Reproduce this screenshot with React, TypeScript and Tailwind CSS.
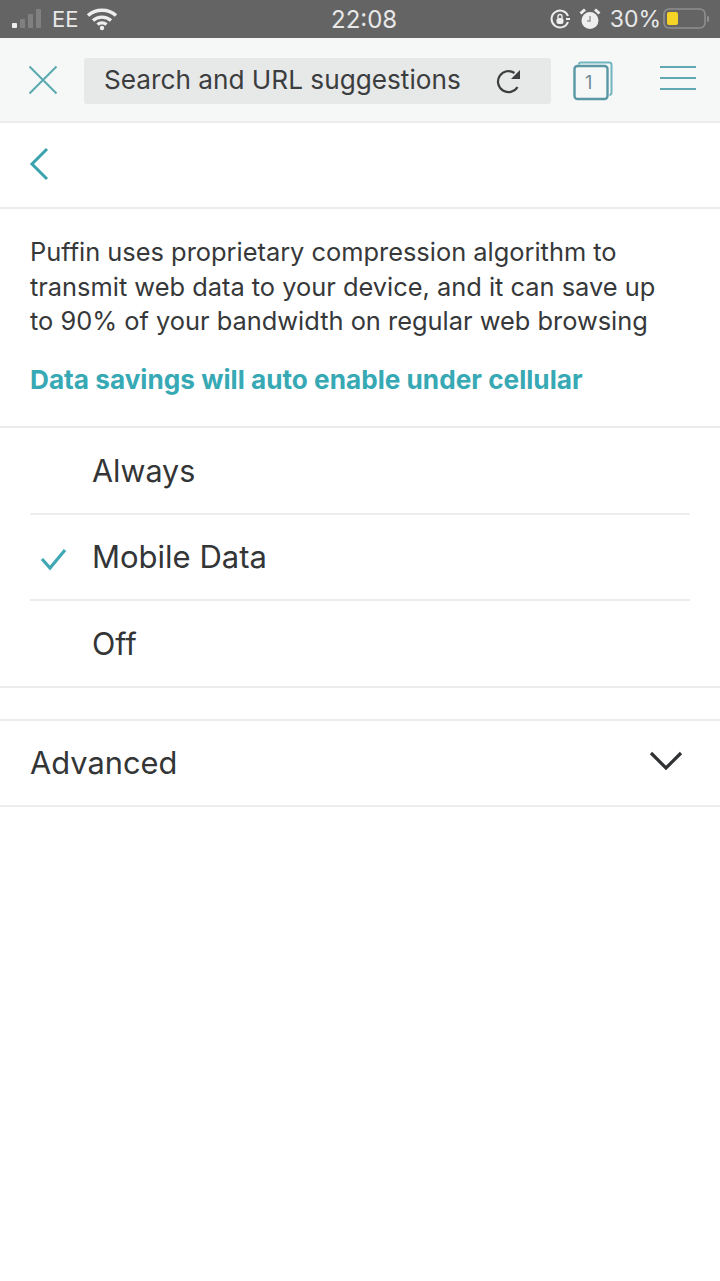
export default function App() {
  const font = { fontFamily: 'Inter, "Liberation Sans", sans-serif' };
  return (
    <div style={font} className="w-[720px] h-[1281px] bg-white overflow-hidden flex flex-col text-[#333536]">
      {/* status bar */}
      <div className="h-[38px] bg-[#646464] flex items-center justify-between pl-3 pr-[7px] text-[#e8e8e8] shrink-0 relative">
        <div className="flex items-center">
          <svg width="32" height="20" viewBox="0 0 32 20">
            <rect x="0" y="14" width="5" height="5" rx="1" fill="#eee" />
            <rect x="8" y="10" width="5" height="9" rx="1" fill="#808080" />
            <rect x="16" y="5" width="5" height="14" rx="1" fill="#808080" />
            <rect x="24" y="0" width="5" height="19" rx="1" fill="#808080" />
          </svg>
          <span className="text-[22px] ml-[8px] leading-none">EE</span>
          <svg width="32" height="24" viewBox="0 0 32 24" className="ml-[8px]" fill="none" stroke="#eee" strokeWidth="3.4">
            <path d="M2 8.5C9.5 1.5 22.5 1.5 30 8.5" />
            <path d="M7 13.5C12 9 20 9 25 13.5" />
            <path d="M11.5 17.5C14 15.5 18 15.5 20.5 17.5" />
            <circle cx="16" cy="21" r="2.2" fill="#eee" stroke="none" />
          </svg>
        </div>
        <span className="absolute left-[331px] top-[6px] text-[24px] leading-[28px]">22:08</span>
        <div className="flex items-center">
          <svg width="22" height="22" viewBox="0 0 22 22" fill="none" stroke="#eee" strokeWidth="2">
            <path d="M19 14A8.5 8.5 0 1 1 19 8" />
            <path d="M17 11h4" />
            <rect x="7.5" y="10" width="7" height="6" rx="2" fill="#eee" stroke="none" />
            <path d="M9 10V8.5a2 2 0 0 1 4 0V10" strokeWidth="1.4" />
          </svg>
          <svg width="24" height="24" viewBox="0 0 24 24" className="ml-[7px]">
            <circle cx="12" cy="13.5" r="8.5" fill="#eee" />
            <path d="M2.5 6.5L7 2.5M21.5 6.5L17 2.5" stroke="#eee" strokeWidth="3" />
            <path d="M12 9v5h-3" stroke="#999" strokeWidth="1.5" fill="none" />
          </svg>
          <span className="text-[23px] leading-none ml-[8px]">30%</span>
          <svg width="50" height="24" viewBox="0 0 50 24" className="ml-[2px]" fill="none">
            <rect x="1" y="2" width="41" height="19" rx="5" stroke="#8f8f8f" strokeWidth="1.6" />
            <rect x="4" y="5" width="11" height="13" rx="2" fill="#f5d327" />
            <rect x="44" y="9" width="2" height="6" rx="1" fill="#8f8f8f" />
          </svg>
        </div>
      </div>

      {/* toolbar */}
      <div className="h-[85px] bg-[#f6f7f7] border-b-2 border-[#ececec] flex items-center shrink-0">
        <svg width="30" height="30" viewBox="0 0 30 30" className="ml-[28px]" stroke="#5ba9b0" strokeWidth="2" fill="none">
          <path d="M1.5 1.5L28.5 28.5M28.5 1.5L1.5 28.5" />
        </svg>
        <div className="ml-[26px] mt-[2px] w-[467px] h-[46px] bg-[#e7e8e8] rounded-[3px] flex items-center pl-5 pr-[28px] justify-between">
          <span className="text-[26.2px] text-[#3b3d3e] leading-none whitespace-nowrap">Search and URL suggestions</span>
          <svg width="28" height="28" viewBox="0 0 28 28" fill="none" stroke="#3c3e3f" strokeWidth="2.2">
            <path d="M22.5 20A10.5 10.5 0 1 1 19.5 6" />
            <path d="M25 3v9h-9z" fill="#3c3e3f" stroke="none" />
          </svg>
        </div>
        <div className="ml-[22px] mt-[2px] w-[40px] h-[40px] relative">
          <svg width="40" height="40" viewBox="0 0 40 40" fill="none" className="absolute inset-0">
            <path d="M6 3.5C6 2 7 1.5 8 1.5H36.5C38 1.5 38.5 2.5 38.5 4V31C38.5 33 38 34 36.5 34" stroke="#6fb6bf" strokeWidth="2" />
            <rect x="1.5" y="5" width="33" height="33" rx="3" fill="#f6f7f7" stroke="#5a98a5" strokeWidth="2.4" />
          </svg>
          <span className="absolute left-[12px] top-[12px] text-[18px] leading-[20px] text-[#6d8a92]">1</span>
        </div>
        <div className="ml-[47px] mb-[3px] w-[36px] flex flex-col gap-[9px]">
          <div className="h-[2px] bg-[#62a8b2]" />
          <div className="h-[2px] bg-[#62a8b2]" />
          <div className="h-[2px] bg-[#62a8b2]" />
        </div>
      </div>

      {/* back row */}
      <div className="h-[86px] border-b-2 border-[#ececec] flex items-start pt-[24px] pl-[29px] shrink-0">
        <svg width="20" height="34" viewBox="0 0 20 34" fill="none" stroke="#39a3ad" strokeWidth="3">
          <path d="M18 2L3 17L18 32" />
        </svg>
      </div>

      {/* description */}
      <div className="h-[219px] border-b-2 border-[#ececec] pl-[30px] pt-[26px] shrink-0">
        <p className="text-[25.4px] leading-[34.5px] text-[#36383a] whitespace-nowrap">
          Puffin uses proprietary compression algorithm to
          <br />
          transmit web data to your device, and it can save up
          <br />
          to 90% of your bandwidth on regular web browsing
        </p>
        <p className="mt-[26px] text-[26.2px] leading-[30px] font-bold text-[#37a9b5] whitespace-nowrap">Data savings will auto enable under cellular</p>
      </div>

      {/* options */}
      <div className="h-[260px] border-b-2 border-[#ececec] pl-[30px] pr-[30px] shrink-0 flex flex-col">
        <div className="h-[87px] border-b-2 border-[#ececec] flex items-center pl-[62px] text-[30.5px]">Always</div>
        <div className="h-[86px] border-b-2 border-[#ececec] flex items-center text-[31px] relative pl-[62px]">
          <svg width="28" height="24" viewBox="0 0 28 24" fill="none" stroke="#3fa8b3" strokeWidth="3.2" className="absolute left-[10px] top-[33px]">
            <path d="M2 11L10 20L25 2" />
          </svg>
          Mobile Data
        </div>
        <div className="flex-1 flex items-center pl-[62px] text-[30.5px]">Off</div>
      </div>

      <div className="h-[31px] shrink-0" />

      {/* advanced */}
      <div className="h-[88px] border-y-2 border-[#ececec] flex items-center justify-between pl-[30px] pr-[37px] shrink-0">
        <span className="text-[30.8px] text-[#333536]">Advanced</span>
        <svg width="34" height="22" viewBox="0 0 34 22" fill="none" stroke="#2f3133" strokeWidth="3.2" className="mb-[4px]">
          <path d="M2 3L17 18L32 3" />
        </svg>
      </div>
    </div>
  );
}
